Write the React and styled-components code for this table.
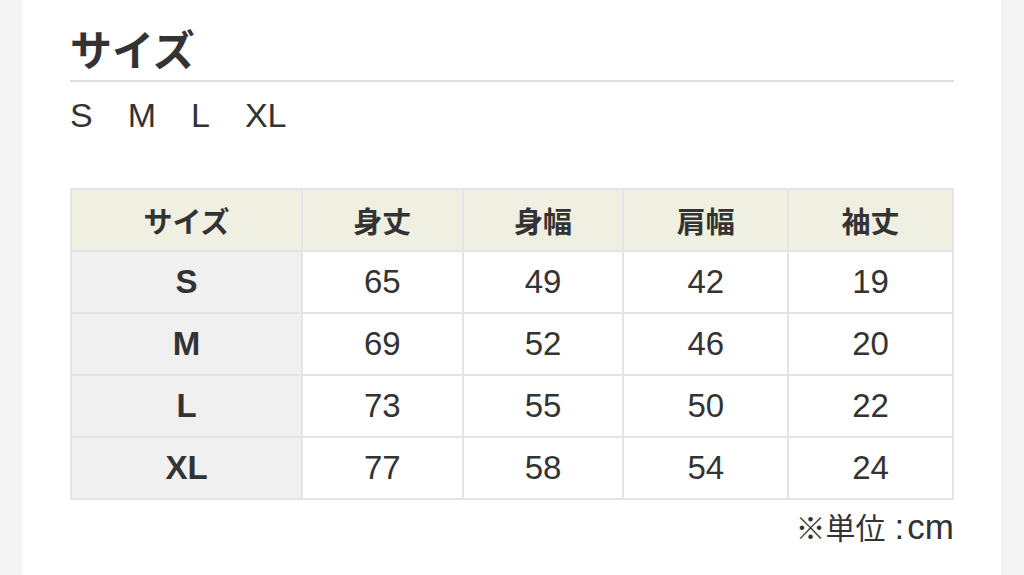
import React from "react";
import styled, { createGlobalStyle } from "styled-components";

const GlobalStyle = createGlobalStyle`
  html, body {
    margin: 0;
    padding: 0;
    background: #f4f4f4;
  }
  body {
    font-family: "Liberation Sans", "Noto Sans CJK JP", sans-serif;
    color: #333;
  }
`;

const Card = styled.div`
  background: #fff;
  margin: 0 23px 0 22px;
  padding: 23px 47px 40px 48px;
  min-height: 575px;
  box-sizing: border-box;
`;

const Heading = styled.h2`
  margin: 0;
  font-family: "Noto Sans CJK JP", sans-serif;
  font-size: 42px;
  font-weight: 700;
  line-height: 49px;
  color: #333;
  padding-bottom: 8px;
  border-bottom: 2px solid #dddddd;
`;

const SizeList = styled.div`
  display: flex;
  gap: 35px;
  margin-top: 13px;
  font-size: 34px;
  line-height: 40px;
  color: #333;
`;

const Table = styled.table`
  width: 100%;
  margin-top: 53px;
  border-collapse: collapse;
  border: 2px solid #e4e4e4;
  table-layout: fixed;
`;

const Th = styled.th`
  width: ${(p) => p.$w}%;
  height: 60px;
  padding: 0;
  background: #f0f0e2;
  border: 2px solid #e4e4e4;
  font-family: "Noto Sans CJK JP", sans-serif;
  font-size: 29px;
  font-weight: 700;
  color: #333;
  text-align: center;
  vertical-align: middle;
`;

const Td = styled.td`
  height: 60px;
  padding: 0;
  background: ${(p) => (p.$head ? "#f0f0f0" : "#fff")};
  border: 2px solid #e4e4e4;
  font-size: 33px;
  font-weight: ${(p) => (p.$head ? 700 : 400)};
  color: #333;
  text-align: center;
  vertical-align: middle;
`;

const Note = styled.p`
  margin: 6px 0 0;
  text-align: right;
  font-family: "Noto Sans CJK JP", sans-serif;
  font-size: 30px;
  line-height: 40px;
  color: #333;
`;

const Unit = styled.span`
  font-family: "Liberation Sans", sans-serif;
  font-size: 35px;
`;

const Colon = styled.span`
  margin: 0 3px 0 9px;
`;

const columns = [
  { label: "サイズ", w: 26.25 },
  { label: "身丈", w: 18.2 },
  { label: "身幅", w: 18.2 },
  { label: "肩幅", w: 18.67 },
  { label: "袖丈", w: 18.67 },
];

const rows = [
  ["S", 65, 49, 42, 19],
  ["M", 69, 52, 46, 20],
  ["L", 73, 55, 50, 22],
  ["XL", 77, 58, 54, 24],
];

export default function App() {
  return (
    <>
      <GlobalStyle />
      <Card>
        <Heading>サイズ</Heading>
        <SizeList>
          {rows.map((r) => (
            <span key={r[0]}>{r[0]}</span>
          ))}
        </SizeList>
        <Table>
          <thead>
            <tr>
              {columns.map((c) => (
                <Th key={c.label} $w={c.w}>
                  {c.label}
                </Th>
              ))}
            </tr>
          </thead>
          <tbody>
            {rows.map((r) => (
              <tr key={r[0]}>
                {r.map((v, i) => (
                  <Td key={i} $head={i === 0}>
                    {v}
                  </Td>
                ))}
              </tr>
            ))}
          </tbody>
        </Table>
        <Note>
          ※単位
          <Unit>
            <Colon>:</Colon>cm
          </Unit>
        </Note>
      </Card>
    </>
  );
}
